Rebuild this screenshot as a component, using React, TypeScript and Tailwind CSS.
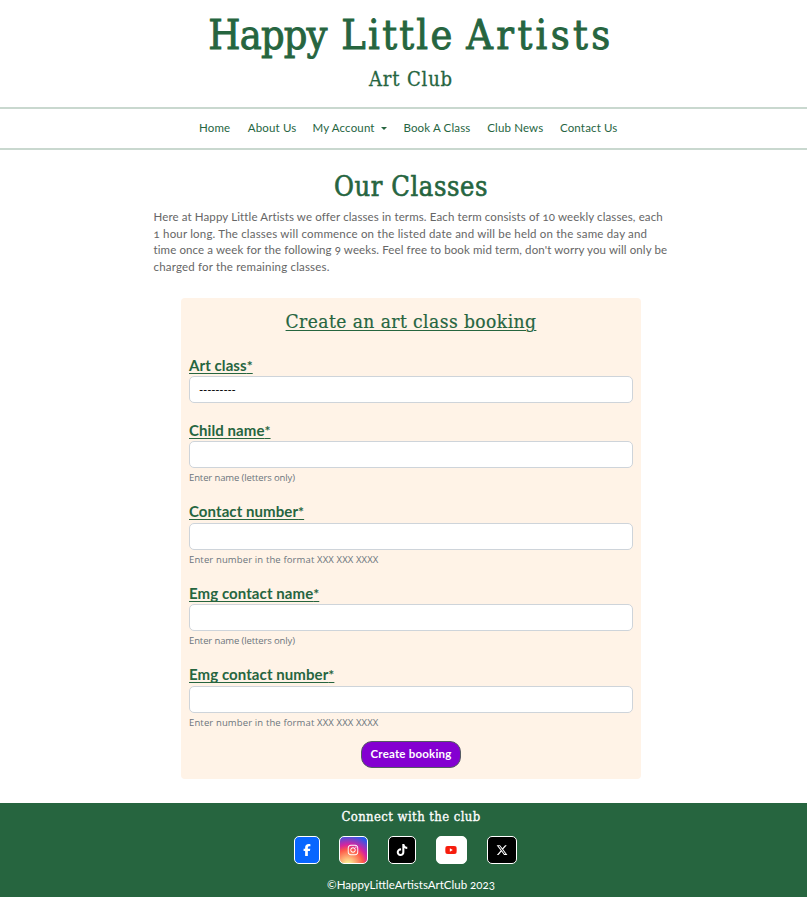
import React from "react";
import { FaFacebookF, FaInstagram, FaTiktok, FaYoutube, FaXTwitter } from "react-icons/fa6";

const slab = "font-['DejaVu_Serif_Condensed','DejaVu_Serif',serif] [font-stretch:condensed]";
const help = "font-['Open_Sans',sans-serif]";

const navItems = [
  { label: "Home", width: "w-8" },
  { label: "About Us", width: "w-12" },
  { label: "My Account", width: "w-[74px]", menu: true },
  { label: "Book A Class", width: "w-[67px]" },
  { label: "Club News", width: "w-[56px]" },
  { label: "Contact Us", width: "w-[57px]" },
];

const nameHint = { hint: "Enter name (letters only)", tracking: "tracking-[-0.12px]" };
const numberHint = { hint: "Enter number in the format XXX XXX XXXX", tracking: "tracking-[0.13px]" };

const fields = [
  { label: "Child name", ...nameHint, height: "h-[81px]", gap: "mt-px" },
  { label: "Contact number", ...numberHint, height: "h-[82px]", gap: "mt-[2px]" },
  { label: "Emg contact name", ...nameHint, height: "h-[81px]", gap: "mt-px" },
  { label: "Emg contact number", ...numberHint, height: "h-[66px]", gap: "mt-[2px]" },
];

const intro = [
  { text: "Here at Happy Little Artists we offer classes in terms. Each term consists of 10 weekly classes, each", tracking: "tracking-[0.12px]" },
  { text: "1 hour long. The classes will commence on the listed date and will be held on the same day and", tracking: "tracking-[0.19px]" },
  { text: "time once a week for the following 9 weeks. Feel free to book mid term, don't worry you will only be", tracking: "tracking-[0.115px]" },
  { text: "charged for the remaining classes.", tracking: "tracking-[0.18px]" },
];

const socials = [
  { name: "Facebook", Icon: FaFacebookF, box: "w-[26px] bg-[#0866ff] mr-[19px]", glyph: "text-white" },
  {
    name: "Instagram",
    Icon: FaInstagram,
    box: "w-[29px] bg-[radial-gradient(circle_at_30%_107%,#fdf497_0%,#fdf497_5%,#fd5949_45%,#d6249f_60%,#285aeb_90%)] mr-[20px]",
    glyph: "text-white",
  },
  { name: "TikTok", Icon: FaTiktok, box: "w-[28px] bg-black mr-[20px]", glyph: "text-white" },
  { name: "YouTube", Icon: FaYoutube, box: "w-[31px] bg-white mr-[20px]", glyph: "text-[#f61c0d]" },
  { name: "X", Icon: FaXTwitter, box: "w-[30px] bg-black", glyph: "text-white" },
];

function Label({ children }: { children: string }) {
  return (
    <label className="block h-[18px] whitespace-nowrap text-[15px] leading-[17px] font-bold tracking-[0.08px] text-[#26653f] underline decoration-1 underline-offset-2">
      {children}
      <span className="text-[14px] leading-none">*</span>
    </label>
  );
}

export default function App() {
  return (
    <div className="h-[897px] w-full overflow-hidden bg-white font-['Lato',sans-serif] text-[#26653f] oldstyle-nums">
      <header className="flex h-[107px] flex-col items-center pl-[15px]">
        <h1 className={`${slab} mt-2 h-[56px] whitespace-nowrap text-[41px] leading-[54px] [-webkit-text-stroke:0.9px_#26653f]`}>
          <span className="tracking-[-0.8px]">Happy</span> <span className="ml-[3px] tracking-[2.3px]">Little</span>{" "}
          <span className="tracking-[3.4px]">Artists</span>
        </h1>
        <p className={`${slab} mt-[3px] whitespace-nowrap text-[20px] leading-6 tracking-[0.85px] [-webkit-text-stroke:0.3px_#26653f]`}>
          Art Club
        </p>
      </header>
      <nav className="flex h-[43px] items-center border-y-2 border-[#c9d8cf] pb-px pl-[199px]">
        <ul className="flex gap-[16.8px] text-[11.5px] tracking-[0.15px]">
          {navItems.map((item) => (
            <li key={item.label} className={`flex items-center justify-between whitespace-nowrap ${item.width}`}>
              {item.label}
              {item.menu && <span className="mt-px border-x-[3px] border-t-[3px] border-x-transparent border-t-[#26653f]" />}
            </li>
          ))}
        </ul>
      </nav>

      <main className="h-[653px]">
        <h2 className={`${slab} pt-[21px] pl-[15px] text-center text-[27px] leading-8 tracking-[0.6px] [-webkit-text-stroke:0.6px_#26653f]`}>
          Our Classes
        </h2>
        <div className="mt-[6px] ml-[153.5px] text-[11.5px] leading-[16.6px] text-[#666]">
          {intro.map((line) => (
            <p key={line.text} className={`whitespace-nowrap ${line.tracking}`}>{line.text}</p>
          ))}
        </div>

        <form className="mt-[23px] ml-[181px] h-[481px] w-[460px] rounded-[4px] bg-[#fff3e7] px-2">
          <h3 className={`${slab} h-[59px] pt-[11px] text-center text-[19px] leading-6 tracking-[0.45px] whitespace-nowrap underline decoration-1 underline-offset-2 [-webkit-text-stroke:0.2px_#26653f]`}>
            Create an art class booking
          </h3>
          <div className="h-[65px]">
            <Label>Art class</Label>
            <div className="mt-px flex h-[27px] items-center rounded-[5px] border border-[#ced4da] bg-white pl-[9px] text-[11.5px] tracking-[-0.2px] text-black">
              ---------
            </div>
          </div>
          {fields.map((field) => (
            <div key={field.label} className={field.height}>
              <Label>{field.label}</Label>
              <input className={`block h-[27px] w-full rounded-[5px] border border-[#ced4da] bg-white px-2 ${field.gap}`} />
              <p className={`${help} mt-[2px] text-[9.5px] leading-[15px] whitespace-nowrap text-[#6c757d] ${field.tracking}`}>{field.hint}</p>
            </div>
          ))}
          <button
            type="button"
            className="mx-auto mt-[9px] block h-[27px] w-[100px] rounded-[11px] border border-[#545b62] bg-[#8400d1] pb-[2px] text-[11.5px] leading-none font-bold tracking-[0.2px] whitespace-nowrap text-white"
          >
            Create booking
          </button>
        </form>
      </main>

      <footer className="h-[94px] bg-[#26653f] pl-[15px] text-center text-white">
        <h4 className={`${slab} pt-[5px] text-[13px] leading-[18px] tracking-[0.4px] [-webkit-text-stroke:0.3px_white]`}>Connect with the club</h4>
        <div className="mt-[10px] mr-3 flex h-[28px] justify-center">
          {socials.map(({ name, Icon, box, glyph }) => (
            <a key={name} aria-label={name} className={`flex h-full items-center justify-center rounded-[5px] border border-white ${box}`}>
              <Icon className={glyph} size={12} />
            </a>
          ))}
        </div>
        <p className="mt-[13px] text-[11.5px] leading-[16px]">©HappyLittleArtistsArtClub 2023</p>
      </footer>
    </div>
  );
}
